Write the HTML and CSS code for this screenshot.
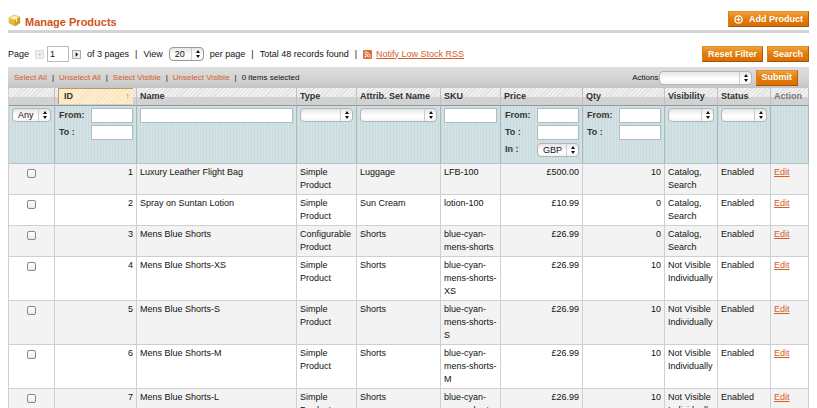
FILE: index.html
```html
<!DOCTYPE html>
<html lang="en">
<head>
<meta charset="utf-8">
<title>Manage Products</title>
<link rel="stylesheet" href="styles.css">
</head>
<body>
<header class="page-head">
  <svg class="cube" viewBox="0 0 13 13" aria-hidden="true">
    <path d="M1 4 6 1l6 2v6l-5 3-6-3z" fill="#e9b92c"/>
    <path d="M1 4 6 1l6 2-5 3z" fill="#fbe9a0"/>
    <path d="M7 6l5-3v6l-5 3z" fill="#d59c18"/>
    <path d="M3 3l5 2v3l1-.6V4.600L4.500 2z" fill="#fff6cf"/>
    <path d="M1 4 6 1l6 2v6l-5 3-6-3z" fill="none" stroke="#c9a850" stroke-width=".5"/>
  </svg>
  <h1>Manage Products</h1>
  <button class="btn" type="button">
    <svg class="plus" viewBox="0 0 9 9" aria-hidden="true"><circle cx="4.500" cy="4.500" r="3.600" fill="none" stroke="#fff" stroke-width="1.400"/><path d="M4.500 2.500v4M2.500 4.500h4" stroke="#fff" stroke-width="1.200"/></svg>
    Add Product
  </button>
</header>

<div class="toolbar">
  <div class="pager">
    <label for="page">Page</label>
    <span class="steps">
      <button class="step off" type="button" aria-label="Previous page" disabled><svg viewBox="0 0 8 8"><path d="M5 2v4L3 4z" fill="#bbb"/></svg></button>
      <input id="page" class="page-no" type="text" value="1">
      <button class="step" type="button" aria-label="Next page"><svg viewBox="0 0 8 8"><path d="M3 1.500v5l3-2.500z" fill="#111"/></svg></button>
    </span>
    <span>of 3 pages</span>
    <span>|</span>
    <label for="limit">View</label>
    <span class="pick limit"><select id="limit"><option>20</option></select></span>
    <span>per page</span>
    <span>|</span>
    <span>Total 48 records found</span>
    <span>|</span>
    <a class="feed" href="#rss"><svg class="rss" viewBox="0 0 9 9" aria-hidden="true"><rect width="9" height="9" rx="1" fill="#dc6f31"/><circle cx="2.500" cy="6.500" r=".9" fill="#fff"/><path d="M1.700 3.800a3.500 3.500 0 0 1 3.500 3.500M1.700 1.800a5.500 5.500 0 0 1 5.500 5.500" fill="none" stroke="#fff"/></svg>
    <span>Notify Low Stock RSS</span></a>
  </div>
  <button class="btn" type="button">Reset Filter</button>
  <button class="btn" type="button">Search</button>
</div>

<div class="massaction">
  <div class="links">
    <a href="#all">Select All</a><span>|</span>
    <a href="#none">Unselect All</a><span>|</span>
    <a href="#visible">Select Visible</a><span>|</span>
    <a href="#hidden">Unselect Visible</a><span>|</span>
    <b>0 items selected</b>
  </div>
  <label for="action">Actions</label>
  <span class="pick action"><select id="action"><option></option></select></span>
  <button class="btn" type="button">Submit</button>
</div>

<table class="grid">
  <colgroup>
    <col class="c-check"><col class="c-num"><col><col class="c-type"><col class="c-set"><col class="c-type"><col class="c-num"><col class="c-num"><col class="c-state"><col class="c-state"><col class="c-edit">
  </colgroup>
  <thead>
    <tr class="titles">
      <th></th><th class="sorted"><span>ID <i>↑</i></span></th><th>Name</th><th>Type</th><th>Attrib. Set Name</th><th>SKU</th><th>Price</th><th>Qty</th><th>Visibility</th><th>Status</th><th class="plain">Action</th>
    </tr>
    <tr class="filters">
      <td><span class="pick"><select aria-label="Selection"><option>Any</option></select></span></td>
      <td>
        <div class="range"><label for="id-from">From:</label><input id="id-from" type="text"></div>
        <div class="range"><label for="id-to">To :</label><input id="id-to" type="text"></div>
      </td>
      <td><input type="text" aria-label="Name"></td>
      <td><span class="pick"><select aria-label="Type"><option></option></select></span></td>
      <td><span class="pick"><select aria-label="Attribute set"><option></option></select></span></td>
      <td><input type="text" aria-label="SKU"></td>
      <td>
        <div class="range"><label for="price-from">From:</label><input id="price-from" type="text"></div>
        <div class="range"><label for="price-to">To :</label><input id="price-to" type="text"></div>
        <div class="range"><label for="currency">In :</label><span class="pick"><select id="currency"><option>GBP</option></select></span></div>
      </td>
      <td>
        <div class="range"><label for="qty-from">From:</label><input id="qty-from" type="text"></div>
        <div class="range"><label for="qty-to">To :</label><input id="qty-to" type="text"></div>
      </td>
      <td><span class="pick"><select aria-label="Visibility"><option></option></select></span></td>
      <td><span class="pick"><select aria-label="Status"><option></option></select></span></td>
      <td></td>
    </tr>
  </thead>
  <tbody>
    <tr><td class="check"><input type="checkbox" aria-label="Select 1"></td><td class="num">1</td><td>Luxury Leather Flight Bag</td><td>Simple Product</td><td>Luggage</td><td>LFB-100</td><td class="num">£500.00</td><td class="num">10</td><td>Catalog, Search</td><td>Enabled</td><td><a href="#1">Edit</a></td></tr>
    <tr><td class="check"><input type="checkbox" aria-label="Select 2"></td><td class="num">2</td><td>Spray on Suntan Lotion</td><td>Simple Product</td><td>Sun Cream</td><td>lotion-100</td><td class="num">£10.99</td><td class="num">0</td><td>Catalog, Search</td><td>Enabled</td><td><a href="#2">Edit</a></td></tr>
    <tr><td class="check"><input type="checkbox" aria-label="Select 3"></td><td class="num">3</td><td>Mens Blue Shorts</td><td>Configurable Product</td><td>Shorts</td><td>blue-cyan-<br>mens-shorts</td><td class="num">£26.99</td><td class="num">0</td><td>Catalog, Search</td><td>Enabled</td><td><a href="#3">Edit</a></td></tr>
    <tr><td class="check"><input type="checkbox" aria-label="Select 4"></td><td class="num">4</td><td>Mens Blue Shorts-XS</td><td>Simple Product</td><td>Shorts</td><td>blue-cyan-<br>mens-shorts-<br>XS</td><td class="num">£26.99</td><td class="num">10</td><td>Not Visible Individually</td><td>Enabled</td><td><a href="#4">Edit</a></td></tr>
    <tr><td class="check"><input type="checkbox" aria-label="Select 5"></td><td class="num">5</td><td>Mens Blue Shorts-S</td><td>Simple Product</td><td>Shorts</td><td>blue-cyan-<br>mens-shorts-<br>S</td><td class="num">£26.99</td><td class="num">10</td><td>Not Visible Individually</td><td>Enabled</td><td><a href="#5">Edit</a></td></tr>
    <tr><td class="check"><input type="checkbox" aria-label="Select 6"></td><td class="num">6</td><td>Mens Blue Shorts-M</td><td>Simple Product</td><td>Shorts</td><td>blue-cyan-<br>mens-shorts-<br>M</td><td class="num">£26.99</td><td class="num">10</td><td>Not Visible Individually</td><td>Enabled</td><td><a href="#6">Edit</a></td></tr>
    <tr><td class="check"><input type="checkbox" aria-label="Select 7"></td><td class="num">7</td><td>Mens Blue Shorts-L</td><td>Simple Product</td><td>Shorts</td><td>blue-cyan-<br>mens-shorts-<br>L</td><td class="num">£26.99</td><td class="num">10</td><td>Not Visible Individually</td><td>Enabled</td><td><a href="#7">Edit</a></td></tr>
  </tbody>
</table>
</body>
</html>
```

FILE: styles.css
```css
* { box-sizing: border-box; }

html { scrollbar-width: none; }

body {
  margin: 0;
  padding: 8px 8px 0;
  background: #fff;
  color: #111;
  font: 9px/13px "Liberation Sans", Arial, sans-serif;
}

input, select, button { font: inherit; color: inherit; margin: 0; }

a { color: #d4602a; }

/* Heading */
.page-head {
  display: flex;
  align-items: center;
  height: 25px;
  border-bottom: 3px solid #d4d4d4;
}

.page-head h1 {
  flex: 1;
  margin: 5px 0 0 4px;
  color: #d2521a;
  font-size: 11px;
  line-height: 16px;
}

.cube { width: 13px; height: 13px; margin-top: 3px; }

.btn {
  display: inline-flex;
  align-items: center;
  justify-content: center;
  height: 16px;
  padding: 0 5px;
  border: 1px solid;
  border-color: #e0902e #b85c05 #a85204 #d8801c;
  background: linear-gradient(#f0a03a, #e07d0c 50%, #d96f04);
  color: #fff;
  font-weight: bold;
  white-space: nowrap;
}

.plus { width: 9px; height: 9px; margin-right: 6px; }

/* Pager */
.toolbar {
  display: flex;
  align-items: center;
  gap: 4px;
  padding: 12px 0 4px;
}

.pager {
  display: flex;
  flex: 1;
  align-items: center;
  gap: 6px;
  height: 18px;
}

.steps { display: flex; align-items: center; gap: 3px; }
.feed { display: flex; align-items: center; gap: 4px; text-decoration: none; }
.feed span { text-decoration: underline; }

.page-no {
  width: 22px;
  height: 16px;
  padding: 0 2px;
  border: 1px solid #bbb;
}

.step {
  width: 9px;
  height: 9px;
  padding: 0;
  border: 1px solid #aaa;
  background: #eee;
}

.step svg { display: block; width: 7px; height: 7px; }
.step.off { border-color: #ddd; }
.rss { width: 9px; height: 9px; }

/* Drop-downs */
.pick { position: relative; display: block; }

.pick select {
  display: block;
  width: 100%;
  height: 14px;
  padding: 0 12px 0 5px;
  appearance: none;
  border: 1px solid #b4b4b4;
  border-radius: 4px;
  background:
    linear-gradient(#ccc, #ccc) right 11px top / 1px 100% no-repeat,
    linear-gradient(#e6e6e6, #fff 60%, #f4f4f4);
  line-height: 12px;
}

.pick::before, .pick::after {
  content: "";
  position: absolute;
  right: 4px;
  border: solid transparent;
  border-width: 0 2px;
  pointer-events: none;
}

.pick::before { top: 3px; border-bottom: 3px solid #111; }
.pick::after { bottom: 3px; border-top: 3px solid #111; }
.limit { width: 35px; }
.limit select { background-color: #e4e4e4; border-color: #999; }

/* Mass action bar */
.massaction {
  display: flex;
  align-items: center;
  height: 21px;
  padding: 0 11px 0 6px;
  background: linear-gradient(#dedede, #d2d2d2 60%, #c4c4c4);
  font-size: 8px;
}

.links { display: flex; flex: 1; gap: 5px; white-space: nowrap; }
.links a { text-decoration: none; }
.links b { font-weight: normal; }
.massaction .action { width: 93px; margin-right: 4px; }
.massaction .btn { padding: 0 5px; font-size: 9px; }

/* Product grid */
.grid {
  width: 100%;
  table-layout: fixed;
  border-collapse: separate;
  border-spacing: 0;
  border-left: 1px solid #cfcfcf;
}

.c-check { width: 46px; }
.c-num { width: 82px; }
.c-type { width: 60px; }
.c-set { width: 84px; }
.c-state { width: 53px; }
.c-edit { width: 38px; }

.grid td, .grid th {
  padding: 2px 3px;
  border-right: 1px solid #cfcfcf;
  border-bottom: 1px solid #cfcfcf;
  text-align: left;
  vertical-align: top;
}

.grid .titles th {
  height: 18px;
  padding: 1px 0 0 3px;
  border-right-color: #c0c0c0;
  border-bottom-color: #8f9a9c;
  background:
    linear-gradient(transparent 55%, #d2d2d2 55%),
    repeating-linear-gradient(135deg, #e0e0e0 0 1px, #f0f0f0 1px 3px);
  color: #333;
  line-height: 14px;
  white-space: nowrap;
}

.grid .titles .plain { color: #777; }
.grid .titles .sorted { padding: 0 3px; }

.sorted span {
  display: flex;
  justify-content: space-between;
  height: 16px;
  padding: 0 3px 0 5px;
  border: 1px solid #bb9a62;
  border-width: 1px 0 0 1px;
  background: repeating-linear-gradient(135deg, #fde3b4 0 1px, #fbeed5 1px 3px);
}

.sorted i { color: #e07d1c; font-style: normal; }

.grid .filters td {
  height: 58px;
  border-right-color: #a9babd;
  border-bottom-color: #b4c3c6;
  background: repeating-linear-gradient(90deg, #c9dadd 0 1px, #d2e1e3 1px 3px);
}

.filters input {
  display: block;
  width: 100%;
  height: 15px;
  padding: 0 2px;
  border: 1px solid #aebdc0;
  background: #fff;
}

.range {
  display: flex;
  align-items: center;
  height: 15px;
  margin-bottom: 2px;
}

.range label { flex: 1; padding-left: 1px; color: #333; font-weight: bold; }
.range input { width: 42px; }
.range .pick { width: 42px; }

.grid tbody tr:nth-child(odd) { background: #f3f3f3; }
.grid .num { text-align: right; }
.grid .check { text-align: center; }

.check input {
  width: 9px;
  height: 9px;
  margin-top: 3px;
  appearance: none;
  border: 1px solid #888;
  border-radius: 2px;
  background: linear-gradient(#fff, #ececec);
  vertical-align: top;
}
```
